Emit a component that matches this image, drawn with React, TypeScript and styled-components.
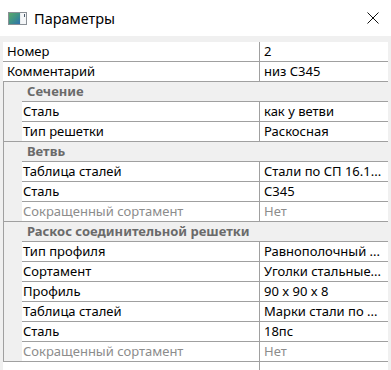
import React from "react";
import styled, { createGlobalStyle } from "styled-components";

const GlobalStyle = createGlobalStyle`
  html, body { margin: 0; padding: 0; background: #f0f0f0; }
  * { box-sizing: border-box; }
`;

const Window = styled.div`
  width: 391px;
  height: 370px;
  background: #f0f0f0;
  font-family: "Noto Sans", "Liberation Sans", sans-serif;
  font-size: 13px;
  color: #000;
  overflow: hidden;
  display: flex;
  flex-direction: column;
`;

const TitleBar = styled.div`
  height: 36px;
  flex: none;
  background: #fff;
  display: flex;
  align-items: center;
  padding: 0 12px 0 8px;
`;

const Title = styled.div`
  margin-left: 7px;
  font-size: 14.5px;
  color: #000;
  flex: 1;
`;

const Content = styled.div`
  padding: 6px 3px 0 3px;
  display: flex;
  flex-direction: column;
`;

const Row = styled.div<{ $last?: boolean }>`
  display: grid;
  grid-template-columns: 1fr 129px;
  height: 20px;
  background: #fff;
  border-bottom: 1px solid #a0a0a0;
  ${(p) => (p.$last ? "height: 19px; border-bottom: none;" : "")}
`;

const Label = styled.div<{ $top?: boolean; $disabled?: boolean }>`
  padding-left: ${(p) => (p.$top ? "4px" : "1px")};
  line-height: 19px;
  white-space: nowrap;
  overflow: hidden;
  color: ${(p) => (p.$disabled ? "#8c8c8c" : "#000")};
`;

const Value = styled.div<{ $disabled?: boolean }>`
  border-left: 1px solid #a0a0a0;
  padding-left: 4px;
  line-height: 19px;
  white-space: nowrap;
  overflow: hidden;
  color: ${(p) => (p.$disabled ? "#8c8c8c" : "#000")};
`;

const Group = styled.div`
  border-left: 1px solid #a0a0a0;
  border-bottom: 1px solid #a0a0a0;
  display: flex;
  flex-direction: column;
`;

const GroupHeader = styled.div`
  height: 19px;
  line-height: 19px;
  padding-left: 23px;
  font-weight: bold;
  color: #6a6a6a;
  white-space: nowrap;
  background: #f0f0f0;
`;

const GroupBody = styled.div`
  display: flex;
`;

const Indent = styled.div`
  width: 18px;
  flex: none;
  background: #f0f0f0;
`;

const Children = styled.div`
  flex: 1;
  border-top: 1px solid #a0a0a0;
  display: flex;
  flex-direction: column;
`;

const AppIcon = () => (
  <svg width="19" height="13" viewBox="0 0 19 13">
    <defs>
      <linearGradient id="g" x1="0" y1="0" x2="1" y2="1">
        <stop offset="0" stopColor="#5aa86a" />
        <stop offset="0.55" stopColor="#3d8f8a" />
        <stop offset="1" stopColor="#2f6fb0" />
      </linearGradient>
    </defs>
    <rect x="0.5" y="0.5" width="18" height="12" fill="#e8ecef" stroke="#8a9096" />
    <rect x="1" y="1" width="11" height="11" fill="url(#g)" />
    <rect x="13" y="1" width="5" height="11" fill="#f4f6f8" />
    <rect x="16" y="2" width="1" height="3" fill="#4a5a6a" />
  </svg>
);

const CloseIcon = () => (
  <svg width="12" height="12" viewBox="0 0 12 12">
    <path d="M0.5 0.5 L11.5 11.5 M11.5 0.5 L0.5 11.5" stroke="#111" strokeWidth="1" fill="none" />
  </svg>
);

type Item = { label: string; value: string; disabled?: boolean };

const groups: { title: string; items: Item[] }[] = [
  {
    title: "Сечение",
    items: [
      { label: "Сталь", value: "как у ветви" },
      { label: "Тип решетки", value: "Раскосная" },
    ],
  },
  {
    title: "Ветвь",
    items: [
      { label: "Таблица сталей", value: "Стали по СП 16.1..." },
      { label: "Сталь", value: "С345" },
      { label: "Сокращенный сортамент", value: "Нет", disabled: true },
    ],
  },
  {
    title: "Раскос соединительной решетки",
    items: [
      { label: "Тип профиля", value: "Равнополочный ..." },
      { label: "Сортамент", value: "Уголки стальные..." },
      { label: "Профиль", value: "90 x 90 x 8" },
      { label: "Таблица сталей", value: "Марки стали по ..." },
      { label: "Сталь", value: "18пс" },
      { label: "Сокращенный сортамент", value: "Нет", disabled: true },
    ],
  },
];

export default function App() {
  return (
    <>
      <GlobalStyle />
      <Window>
        <TitleBar>
          <AppIcon />
          <Title>Параметры</Title>
          <CloseIcon />
        </TitleBar>
        <Content>
          <Row>
            <Label $top>Номер</Label>
            <Value>2</Value>
          </Row>
          <Row>
            <Label $top>Комментарий</Label>
            <Value>низ С345</Value>
          </Row>
          {groups.map((g) => (
            <Group key={g.title}>
              <GroupHeader>{g.title}</GroupHeader>
              <GroupBody>
                <Indent />
                <Children>
                  {g.items.map((it, i) => (
                    <Row key={i} $last={i === g.items.length - 1}>
                      <Label $disabled={it.disabled}>{it.label}</Label>
                      <Value $disabled={it.disabled}>{it.value}</Value>
                    </Row>
                  ))}
                </Children>
              </GroupBody>
            </Group>
          ))}
          <Row>
            <Label $top />
            <Value />
          </Row>
        </Content>
      </Window>
    </>
  );
}
